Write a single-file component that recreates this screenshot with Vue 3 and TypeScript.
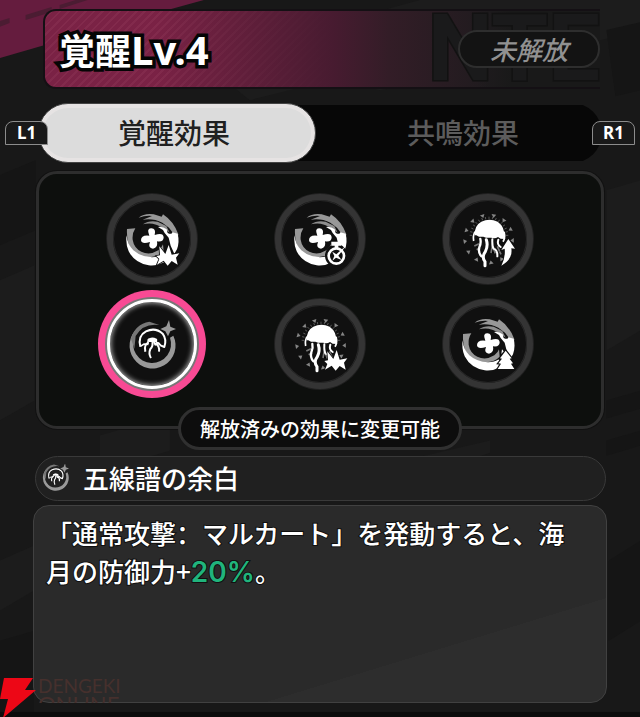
<script setup lang="ts">
import { computed, ref } from 'vue'

type Tab = 'awakening' | 'resonance'
interface Effect {
  id: number
  label: string
  base: string
  badge?: string
}

const tab = ref<Tab>('awakening')
const selectedId = ref(4)

const effects: Effect[] = [
  { id: 1, label: '効果1', base: 'swirl', badge: 'burst' },
  { id: 2, label: '効果2', base: 'swirl', badge: 'timer' },
  { id: 3, label: '効果3', base: 'jelly', badge: 'up' },
  { id: 4, label: '五線譜の余白', base: 'moon' },
  { id: 5, label: '効果5', base: 'jelly', badge: 'burst' },
  { id: 6, label: '効果6', base: 'swirl', badge: 'tree' },
]

const spikes = computed(() =>
  Array.from({ length: 13 }, (_, i) => `rotate(${-150 + i * 27} 173 161)`),
)
const rays = computed(() =>
  Array.from({ length: 17 }, (_, i) => `rotate(${-88 + i * 11} 174 152)`),
)
</script>

<template>
  <main class="page">
    <svg class="backdrop" viewBox="0 0 640 717" preserveAspectRatio="xMidYMin slice" aria-hidden="true">
      <rect width="640" height="717" fill="#181818" />
      <path d="M0 0H204L128 21L0 58Z" fill="#651c3e" />
      <path d="M0 21L10 18V23L0 27ZM26 15L52 7V12L26 20ZM60 5L76 0H88L60 9Z" fill="#4b1c32" />
      <g fill="#1c1c1c">
        <path d="M250 100L330 80L380 90L480 70L640 30V0H420L200 60Z" />
        <path d="M0 280L35 265V400L0 420ZM606 190L640 180V330L606 350Z" />
        <path d="M100 435L170 415V450L100 470ZM360 470L490 440V452L380 490ZM0 560L34 545V590L0 610Z" />
      </g>
      <g fill="#151515">
        <path d="M606 30L640 22V90L615 96ZM0 175L36 160V230L0 245ZM0 640L34 630V717H0ZM608 560L640 540V620L608 640Z" />
        <path d="M606 400L640 390V408L606 418ZM606 440L640 430V445L606 455Z" />
      </g>
      <rect y="711" width="640" height="6" fill="#0c0c0c" />
    </svg>

    <svg class="symbols" aria-hidden="true">
      <symbol id="swirl" viewBox="36 26 270 270">
        <path d="M96 131L121 129Q111 144 113 163Q117 188 139 199Q164 211 190 195Q201 187 204 177L206 199Q192 214 165 216Q125 214 107 190Q94 164 96 131Z" fill="#989898" />
        <path d="M131 97Q148 83 176 87L200 94L204 87Q236 108 250 147L248 160L238 150Q231 138 222 127L202 112Q175 98 143 103L171 92Q151 90 131 97Z" fill="#989898" />
        <path d="M144 117Q161 104 188 109L214 122L224 142Q199 121 173 115Q157 113 144 117Z" fill="#8e8e8e" />
        <path d="M95 150Q97 177 115 195Q138 215 171 216Q190 216 204 207L207 231Q185 243 161 240Q119 233 101 198Q91 175 95 150Z" fill="#fff" />
        <path d="M189 125Q202 122 215 132L218 143Q231 149 232 141L248 145Q254 169 246 192L238 205L227 181L221 157L209 143L204 134Z" fill="#fff" />
        <path d="M163 151Q154 130 168 129Q184 128 179 149Q205 140 206 156Q206 171 186 168Q190 188 174 190Q158 188 165 170Q140 178 138 165Q138 148 163 151Z" fill="#fff" />
      </symbol>

      <symbol id="jelly" viewBox="36 26 270 270">
        <g fill="#858585">
          <path v-for="(t, i) in spikes" :key="i" d="M166 86L180 85L174 96Z" :transform="t" />
        </g>
        <g stroke="#777" stroke-width="2">
          <path v-for="(t, i) in rays" :key="i" d="M174 94V101" :transform="t" />
          <path d="M130 182L144 175M137 193L147 187M180 203L184 181L193 204M199 183L210 207" stroke-width="5" />
        </g>
        <path d="M131 150Q130 120 151 109Q175 97 200 109Q223 125 220 157L224 161L209 160L201 155Q191 162 181 157Q168 159 157 154L144 154L136 150Z" fill="#fff" />
        <path d="M132 139Q125 151 128 167M219 139Q224 157 216 169" stroke="#fff" stroke-width="5" fill="none" />
        <g stroke="#fff" stroke-linecap="round" fill="none">
          <path d="M148 161Q151 173 145 186Q141 202 151 213" stroke-width="7" />
          <path d="M166 163Q172 181 163 199Q151 215 162 229L162 241" stroke-width="9" />
          <path d="M184 162Q183 183 188 190Q200 194 199 213" stroke-width="6" />
          <path d="M202 163Q197 178 209 185" stroke-width="6" />
        </g>
      </symbol>

      <symbol id="burst" viewBox="36 26 270 270">
        <path d="M186 238L193 221L184 212L195 210L193 183L211 206L221 179L230 208L253 204L243 217L248 238L230 227L218 241L206 226Z" fill="#fff" stroke="#101010" stroke-width="5" paint-order="stroke" />
      </symbol>

      <symbol id="timer" viewBox="36 26 270 270">
        <circle cx="220" cy="211" r="34" fill="#101010" />
        <path d="M205 169H234V181H226V190H215V181H205Z" fill="#fff" />
        <circle cx="220" cy="212" r="23" fill="#101010" stroke="#fff" stroke-width="8" />
        <path d="M208 199L220 207L249 181L226 211L236 224L219 217L208 226L214 212Z" fill="#fff" />
      </symbol>

      <symbol id="up" viewBox="36 26 270 270">
        <path d="M232 161L252 190L241 189Q246 222 211 241Q224 216 221 190L211 194Z" fill="#fff" stroke="#101010" stroke-width="5" paint-order="stroke" />
      </symbol>

      <symbol id="tree" viewBox="36 26 270 270">
        <path d="M224 181L242 204L236 205L246 219L240 220L250 236H200L210 220L202 219L213 205L207 204Z" fill="#fff" stroke="#101010" stroke-width="7" paint-order="stroke" />
        <path d="M213 177L218 183L211 191Z" fill="#fff" />
      </symbol>

      <symbol id="moon" viewBox="36 41 270 270">
        <path d="M128 128A69 69 0 1 0 235 151L225 157A57 57 0 1 1 119 153Q121 139 128 128Z" fill="#999" />
        <path d="M108 160Q120 116 163 109L193 119Q145 112 122 152L118 190Z" fill="#777" />
        <path d="M114 193A60 60 0 0 0 230 193L234 210A69 60 0 0 1 112 210Z" fill="#999" />
        <path d="M222 104L226 124L243 131L226 138L219 153L211 138L196 131L214 123Z" fill="#999" />
        <path d="M136 184Q128 151 153 138Q181 125 203 145Q216 163 208 185L198 181L191 174L181 178L176 168" stroke="#fff" stroke-width="6" fill="none" stroke-linejoin="round" />
        <path d="M136 183L147 176L158 177L160 163Q171 155 184 163L184 170L193 175" stroke="#fff" stroke-width="5" fill="none" />
        <path d="M159 160H185V170H162Z" fill="#fff" />
        <path d="M161 172Q146 177 151 199M172 170Q175 182 166 191Q160 205 168 218M181 174Q195 182 192 199" stroke="#fff" stroke-width="6" fill="none" />
      </symbol>
    </svg>

    <header class="banner">
      <span class="ghost" aria-hidden="true">NTE</span>
      <h1>覚醒<span>Lv.4</span></h1>
      <span class="status">未解放</span>
    </header>

    <nav class="tabs" aria-label="効果の種類">
      <kbd>L1</kbd>
      <div class="tab-track" role="tablist">
        <button type="button" role="tab" :class="{ active: tab === 'awakening' }" :aria-selected="tab === 'awakening'" @click="tab = 'awakening'">覚醒効果</button>
        <button type="button" role="tab" :class="{ active: tab === 'resonance' }" :aria-selected="tab === 'resonance'" @click="tab = 'resonance'">共鳴効果</button>
      </div>
      <kbd>R1</kbd>
    </nav>

    <section class="panel">
      <div class="effects">
        <button
          v-for="effect in effects"
          :key="effect.id"
          type="button"
          class="effect"
          :class="{ selected: effect.id === selectedId }"
          :aria-label="effect.label"
          :aria-pressed="effect.id === selectedId"
          @click="selectedId = effect.id"
        >
          <svg viewBox="0 0 90 90" aria-hidden="true">
            <use :href="`#${effect.base}`" width="90" height="90" />
            <use v-if="effect.badge" :href="`#${effect.badge}`" width="90" height="90" />
          </svg>
        </button>
      </div>
    </section>
    <p class="hint">解放済みの効果に変更可能</p>

    <h2 class="effect-title">
      <svg viewBox="21 22 48 48" aria-hidden="true"><use href="#moon" width="90" height="90" /></svg>
      五線譜の余白
    </h2>

    <section class="description">
      <p>「通常攻撃<span class="colon">：</span>マルカート」を発動すると、海月の防御力+<strong>20%</strong>。</p>
    </section>

    <div class="watermark">
      <svg viewBox="0 0 36 40" aria-hidden="true"><path d="M4 0H33L25 12H36L3 40L8 21H0Z" fill="#ed0716" /></svg>
      <div class="wordmark">
        <span>DENGEKI</span>
        <span class="second">ONLINE</span>
      </div>
    </div>
  </main>
</template>

<style>
body {
  margin: 0;
  background: #181818;
}
</style>

<style scoped>
.page {
  position: relative;
  box-sizing: border-box;
  min-height: 100vh;
  padding: 9px 0 15px;
  display: flex;
  flex-direction: column;
  overflow: hidden;
  isolation: isolate;
  color: #fff;
  font-family: "Noto Sans CJK JP", sans-serif;
  font-weight: 500;
}
.backdrop {
  position: absolute;
  inset: 0;
  width: 100%;
  height: 100%;
  z-index: -1;
}
.symbols {
  position: absolute;
  width: 0;
  height: 0;
}
.banner {
  position: relative;
  box-sizing: border-box;
  height: 80px;
  margin: 0 40px 0 43px;
  padding-left: 14px;
  display: flex;
  align-items: center;
  justify-content: space-between;
  border: 2px solid #141014;
  border-right: 0;
  border-radius: 13px 0 0 13px;
  background:
    linear-gradient(90deg, transparent 78%, #191919 84%),
    linear-gradient(90deg, transparent 20%, #471b30 52%, #331d27 62%, #1f1b1e 80%),
    repeating-linear-gradient(135deg, transparent 0 4px, #822a4c 4px 6px),
    #7a2245;
}
.ghost {
  position: absolute;
  top: -2px;
  right: 0;
  color: #1a1a1b;
  font: bold 92px/80px Roboto, sans-serif;
  -webkit-text-stroke: 3px #121212;
  paint-order: stroke fill;
}
h1 {
  position: relative;
  margin: 0;
  font-size: 36px;
  line-height: 52px;
  font-weight: 700;
  -webkit-text-stroke: 7px #050505;
  paint-order: stroke fill;
}
h1 span {
  font-family: "Noto Sans", sans-serif;
  font-size: 40px;
  line-height: 1;
}
.status {
  position: relative;
  box-sizing: border-box;
  width: 142px;
  height: 38px;
  border: 2px solid #2e2e2e;
  border-radius: 19px;
  background: #131313;
  color: #919191;
  font-size: 26px;
  line-height: 34px;
  font-style: italic;
  text-align: center;
}
.tabs {
  display: flex;
  align-items: center;
  margin: 14px 5px 0;
}
kbd {
  position: relative;
  z-index: 1;
  box-sizing: border-box;
  flex: none;
  width: 43px;
  height: 24px;
  border: 1px solid #8c8c8c;
  border-radius: 8px 8px 0 0;
  background: #191919;
  text-align: center;
  font: bold 17px/22px "Noto Sans", sans-serif;
}
.tab-track {
  flex: 1;
  display: grid;
  grid-template-columns: 1fr 1fr;
  gap: 8px;
  margin: 0 -10px;
  border-radius: 30px;
  background: linear-gradient(transparent 2px, #070707 2px 58px, transparent 58px);
}
.tab-track button {
  height: 60px;
  padding: 0 0 2px;
  border: 0;
  border-radius: 30px;
  background: transparent;
  color: #5c5c5c;
  font: inherit;
  font-size: 28px;
}
.tab-track button:first-child {
  padding-right: 6px;
}
.tab-track .active {
  background: #dcdcdc;
  color: #202020;
  border: 1px solid #444;
  box-shadow: inset 0 0 0 4px #e6e3e3;
}
.panel {
  box-sizing: border-box;
  margin: 8px 36px 0;
  padding: 20px 29px 37px;
  border: 3px solid #2d2d2d;
  border-radius: 21px;
  background: #0d0f0d;
  box-shadow: 0 0 0 1px #111;
}
.effects {
  display: grid;
  grid-template-columns: repeat(3, 1fr);
  justify-items: center;
  row-gap: 15px;
}
.effect {
  box-sizing: border-box;
  width: 90px;
  height: 90px;
  padding: 0;
  display: grid;
  place-items: center;
  border: 6px solid #343434;
  border-radius: 50%;
  background: #101010;
  box-shadow: inset 0 0 0 1px #272727, 0 0 0 1px #202020;
}
.effect svg {
  width: 90px;
  height: 90px;
  margin: -6px;
}
.effect.selected {
  border: 3px solid #fff;
  box-shadow: inset 0 0 5px 1px #aaa, 0 0 0 2px #777, 0 0 0 9px #f84a94;
}
.hint {
  position: relative;
  box-sizing: border-box;
  align-self: center;
  min-width: 284px;
  margin: -22px 0 0;
  border: 3px solid #303030;
  border-radius: 22px;
  background: #0d0d0d;
  text-align: center;
  font-size: 20px;
  line-height: 37px;
}
.effect-title {
  box-sizing: border-box;
  display: flex;
  align-items: center;
  gap: 14px;
  height: 45px;
  margin: 6px 34px 0 35px;
  padding: 0 0 2px 6px;
  border: 1px solid #393939;
  border-radius: 23px;
  background: #202020;
  font-size: 26px;
  line-height: 40px;
  font-weight: 500;
}
.effect-title svg {
  width: 27px;
  height: 27px;
}
.description {
  box-sizing: border-box;
  flex: 1;
  min-height: 198px;
  margin: 4px 33px 0;
  padding: 8px 24px 8px 12px;
  border: 1px solid #414141;
  border-radius: 16px;
  background: linear-gradient(163deg, #2a2a2a 72%, #2d2d2d 72%);
}
.description p {
  margin: 0;
  font-size: 26px;
  line-height: 38px;
  -webkit-text-stroke: 2px #101010;
  paint-order: stroke fill;
}
.colon {
  font-family: "Noto Sans CJK SC", sans-serif;
}
strong {
  color: #20b47c;
  font-family: Inter, sans-serif;
  font-size: 28px;
  font-weight: 600;
  line-height: 1;
}
.watermark {
  position: absolute;
  left: 0;
  bottom: 0;
  display: flex;
  height: 40px;
  gap: 2px;
}
.watermark svg {
  width: 36px;
  height: 40px;
}
.wordmark {
  display: flex;
  flex-direction: column;
  height: 25px;
  overflow: hidden;
  color: #46302d;
  font: 19px/16px Lato, sans-serif;
}
.wordmark .second {
  font-size: 22px;
  line-height: 20px;
}
</style>
